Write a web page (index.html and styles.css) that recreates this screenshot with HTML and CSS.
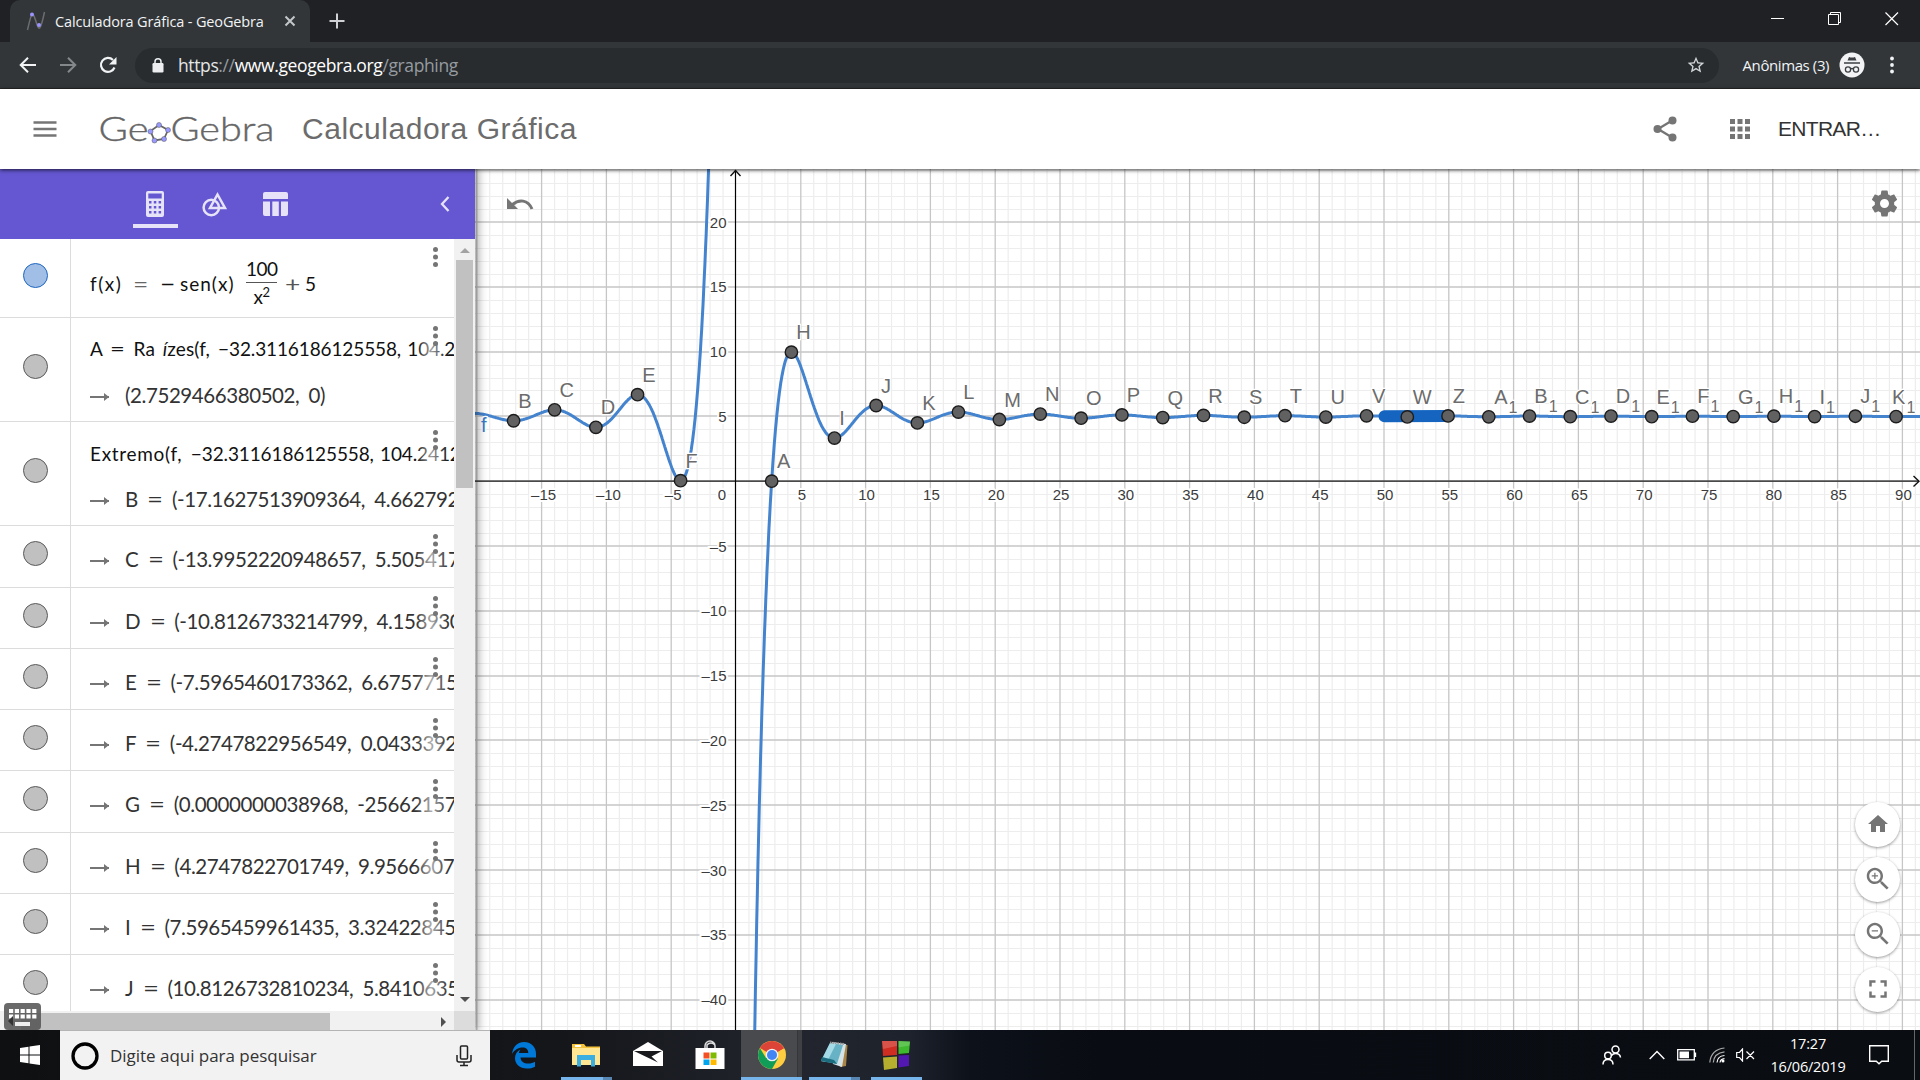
FILE: index.html
```html
<!DOCTYPE html>
<html lang="pt-BR">
<head>
<meta charset="utf-8">
<title>Calculadora Gráfica - GeoGebra</title>
<link rel="stylesheet" href="styles.css">
</head>
<body>
<div class="tabstrip">
  <div class="tab">
    <svg class="tab-icon" width="20" height="20" viewBox="0 0 20 20"><path d="M1.500 19C5 4 6 -2 9.500 9S14 22 18.500 1" fill="none" stroke="#6d6d70" stroke-width="1.500"/><circle cx="6" cy="3.500" r="2" fill="#9a93ff"/><circle cx="13" cy="14" r="2" fill="#9a93ff"/></svg>
    <span class="tab-title">Calculadora Gráfica - GeoGebra</span>
    <svg class="tab-close" width="12" height="12" viewBox="0 0 12 12"><path d="M1.500 1.500l9 9M10.500 1.500l-9 9" stroke="#c4c7ca" stroke-width="2"/></svg>
  </div>
  <svg class="tab-new" width="16" height="16" viewBox="0 0 16 16"><path d="M8 .5v15M.5 8h15" stroke="#cfd1d4" stroke-width="2"/></svg>
  <div class="window-buttons">
    <svg width="14" height="14" viewBox="0 0 14 14"><path d="M0 6.500h13" stroke="#fff"/></svg>
    <svg width="14" height="14" viewBox="0 0 14 14"><path d="M.5 2.500h10v10h-10zM2.500 2.500v-2h10v10h-2" fill="none" stroke="#fff"/></svg>
    <svg width="14" height="14" viewBox="0 0 14 14"><path d="M.5.5l12.500 12.500M13 .5L.5 13" stroke="#fff" stroke-width="1.200"/></svg>
  </div>
</div>
<div class="toolbar">
  <div class="nav-buttons">
    <svg width="18" height="18" viewBox="0 0 18 18"><path d="M17 9H2M9 1.700L1.700 9 9 16.300" fill="none" stroke="#f1f3f4" stroke-width="2"/></svg>
    <svg width="18" height="18" viewBox="0 0 18 18"><path d="M1 9h15M9 1.700L16.300 9 9 16.300" fill="none" stroke="#85888b" stroke-width="2"/></svg>
    <svg width="18" height="18" viewBox="0 0 18 18"><path d="M15.500 11.500A7 7 0 1 1 14 4" fill="none" stroke="#f1f3f4" stroke-width="2.200"/><path d="M17.500 1v7.500H10z" fill="#f1f3f4"/></svg>
  </div>
  <div class="omnibox">
    <svg width="12" height="15" viewBox="0 0 12 15"><rect x="0.500" y="5" width="11" height="9.500" rx="1.200" fill="#eceef0"/><path d="M3 6V3.800a3 3 0 0 1 6 0V6" fill="none" stroke="#eceef0" stroke-width="1.500"/></svg>
    <span class="url"><span class="url-scheme">https<i>://</i></span>www.geogebra.org<i>/graphing</i></span>
    <svg class="star" width="20" height="20" viewBox="0 0 24 24"><path d="M22 9.240l-7.190-.620L12 2 9.190 8.630 2 9.240l5.460 4.730L5.820 21 12 17.270 18.180 21l-1.630-7.030L22 9.240zM12 15.400l-3.760 2.270 1-4.280-3.320-2.880 4.380-.380L12 6.100l1.710 4.040 4.380.380-3.320 2.880 1 4.280L12 15.400z" fill="#d2d4d6"/></svg>
  </div>
  <span class="incognito-label">Anônimas (3)</span>
  <svg class="incognito" width="26" height="26" viewBox="0 0 26 26"><circle cx="13" cy="13" r="12.500" fill="#f1f3f4"/><path d="M8.500 8.500L10 5q3 1 6 0l1.500 3.500zM5 10.200h16v1.600H5z" fill="#3c4043"/><g fill="none" stroke="#3c4043" stroke-width="1.300"><circle cx="9" cy="17.500" r="2.600"/><circle cx="17" cy="17.500" r="2.600"/><path d="M11.600 17q1.400-1 2.800 0"/></g></svg>
  <svg class="menu-dots" width="6" height="18" viewBox="0 0 6 18"><g fill="#f1f3f4"><circle cx="3" cy="2.500" r="1.900"/><circle cx="3" cy="9" r="1.900"/><circle cx="3" cy="15.500" r="1.900"/></g></svg>
</div>
<header class="app-header">
  <svg class="burger" width="24" height="18" viewBox="0 0 24 18"><path d="M.5 2.500h23M.5 9h23M.5 15.500h23" stroke="#757575" stroke-width="2.300"/></svg>
  <svg class="logo" width="184" height="60" viewBox="94 98 184 60">
    <g class="logo-text"><text x="98.500" y="139.800" textLength="50" lengthAdjust="spacingAndGlyphs">Ge</text><text x="170.500" y="139.800" textLength="104" lengthAdjust="spacingAndGlyphs">Gebra</text></g>
    <path d="M159 124l9 5-4 9-9.500 1.500-4-9.500z" fill="none" stroke="#666" stroke-width="1.800"/>
    <g fill="#9999ff" stroke="#555" stroke-width=".5"><circle cx="159" cy="124" r="2.500"/><circle cx="168" cy="129" r="2.500"/><circle cx="164" cy="138" r="2.500"/><circle cx="154.500" cy="139.500" r="2.500"/><circle cx="150.500" cy="130.500" r="2.500"/></g>
  </svg>
  <h1 class="app-title">Calculadora Gráfica</h1>
  <svg class="share" width="28" height="28" viewBox="0 0 28 28"><path d="M22 5L7 14l15 9" fill="none" stroke="#757575" stroke-width="2.300"/><g fill="#757575"><circle cx="21.500" cy="5.500" r="4"/><circle cx="6.500" cy="14" r="4"/><circle cx="21.500" cy="22.500" r="4"/></g></svg>
  <svg class="apps" width="20" height="20" viewBox="0 0 20 20"><path d="M0 0h5v5H0zM7.500 0h5v5h-5zM15 0h5v5h-5zM0 7.500h5v5H0zM7.500 7.500h5v5h-5zM15 7.500h5v5h-5zM0 15h5v5H0zM7.500 15h5v5h-5zM15 15h5v5h-5z" fill="#757575"/></svg>
  <span class="sign-in">ENTRAR…</span>
</header>
<main class="workspace">
  <aside class="panel">
    <nav class="panel-tabs">
      <div class="panel-tab selected"><svg width="18" height="26" viewBox="0 0 18 26"><path fill-rule="evenodd" fill="#e6e3f8" d="M2 0h14a2 2 0 0 1 2 2v22a2 2 0 0 1-2 2H2a2 2 0 0 1-2-2V2a2 2 0 0 1 2-2zM2.300 2.500v5h13.400v-5zM3 10v2.500h2.500V10zM7.800 10v2.500h2.500V10zM12.600 10v2.500h2.500V10zM3 15v2.500h2.500V15zM7.800 15v2.500h2.500V15zM12.600 15v2.500h2.500V15zM3 20v2.500h2.500V20zM7.800 20v2.500h2.500V20zM12.600 20v2.500h2.500V20z"/></svg></div>
      <div class="panel-tab"><svg width="26" height="26" viewBox="0 0 26 26"><g fill="none" stroke="#e6e3f8" stroke-width="2.500"><circle cx="9.300" cy="16.500" r="7.700"/><path d="M15.500 3.500L23 17H8z"/></g></svg></div>
      <div class="panel-tab"><svg width="25" height="24" viewBox="0 0 25 24"><path fill="#e6e3f8" d="M2 0h21a2 2 0 0 1 2 2v5H0V2a2 2 0 0 1 2-2zM0 9.500h7V24H2a2 2 0 0 1-2-2zM9.300 9.500h6.500V24H9.300zM18 9.500h7V22a2 2 0 0 1-2 2h-5z"/></svg></div>
      <svg class="collapse" width="10" height="16" viewBox="0 0 10 16"><path d="M8.500 1L2 8l6.500 7" fill="none" stroke="#e6e3f8" stroke-width="2.300"/></svg>
    </nav>
    <div class="panel-body">
      <div class="rows">
        <div class="row formula"><b class="marble blue"></b><div class="cell"><div class="math"><span class="fx">f(x)</span><span class="eq">=</span><span class="neg">−</span><span class="sen">sen(x)</span><span class="frac"><span>100</span><span>x<sup>2</sup></span></span><span class="plus">+</span><span>5</span></div></div><u class="dots"></u></div>
        <div class="row tall"><b class="marble"></b><div class="cell"><div class="in">A <i>=</i> Ra<em> í</em>zes(f, <s>−32.3116186125558, 104.2</s></div><div class="out"><q></q><span class="val">(2.7529466380502, 0)</span></div></div><u class="dots"></u></div>
        <div class="row tall"><b class="marble"></b><div class="cell"><div class="in wide">Extremo(f, <s>−32.3116186125558, 104.2412</s></div><div class="out"><q></q><span class="val">B <i>=</i> (-17.1627513909364, 4.662792</span></div></div><u class="dots"></u></div>
        <div class="row mid"><b class="marble"></b><div class="cell"><div class="out"><q></q><span class="val">C <i>=</i> (-13.9952220948657, 5.505417</span></div></div><u class="dots"></u></div>
        <div class="row"><b class="marble"></b><div class="cell"><div class="out"><q></q><span class="val">D <i>=</i> (-10.8126733214799, 4.158930</span></div></div><u class="dots"></u></div>
        <div class="row"><b class="marble"></b><div class="cell"><div class="out"><q></q><span class="val">E <i>=</i> (-7.5965460173362, 6.6757715</span></div></div><u class="dots"></u></div>
        <div class="row"><b class="marble"></b><div class="cell"><div class="out"><q></q><span class="val">F <i>=</i> (-4.2747822956549, 0.0433392</span></div></div><u class="dots"></u></div>
        <div class="row mid"><b class="marble"></b><div class="cell"><div class="out"><q></q><span class="val">G <i>=</i> (0.0000000038968, -25662157</span></div></div><u class="dots"></u></div>
        <div class="row"><b class="marble"></b><div class="cell"><div class="out"><q></q><span class="val">H <i>=</i> (4.2747822701749, 9.9566607</span></div></div><u class="dots"></u></div>
        <div class="row"><b class="marble"></b><div class="cell"><div class="out"><q></q><span class="val">I <i>=</i> (7.5965459961435, 3.32422845</span></div></div><u class="dots"></u></div>
        <div class="row"><b class="marble"></b><div class="cell"><div class="out"><q></q><span class="val">J <i>=</i> (10.8126732810234, 5.8410635</span></div></div><u class="dots"></u></div>
      </div>
      <div class="vscroll">
        <svg width="10" height="5" viewBox="0 0 10 5"><path d="M0 5l5-5 5 5z" fill="#a3a3a3"/></svg>
        <div class="vthumb"></div>
        <svg class="down" width="10" height="5" viewBox="0 0 10 5"><path d="M0 0l5 5 5-5z" fill="#505050"/></svg>
      </div>
    </div>
    <div class="hscroll">
      <div class="htrack"><div class="hthumb"></div><svg width="5" height="10" viewBox="0 0 5 10"><path d="M0 0l5 5-5 5z" fill="#505050"/></svg></div>
      <div class="corner"></div>
    </div>
    <svg class="keyboard" width="37" height="27" viewBox="0 0 37 27"><rect width="37" height="27" rx="4" fill="#555" fill-opacity=".88"/><path d="M5 8h28M5 13.500h28" stroke="#fff" stroke-width="4" stroke-dasharray="4.200 1.600"/><path d="M11 21h15" stroke="#eee" stroke-width="4"/><path d="M9 13v10l-5-5z" fill="#333"/></svg>
  </aside>
  <section class="graph">
    <svg id="plot" width="1445" height="861" viewBox="475 169 1445 861"></svg>
    <svg class="undo" width="27" height="13" viewBox="0 0 27 13"><path d="M0 0l11 11H0z" fill="#757575"/><path d="M5.500 6.500C12 1 21 1.500 25 11" fill="none" stroke="#757575" stroke-width="3"/></svg>
    <svg class="gear" width="31" height="31" viewBox="0 0 24 24"><path fill="#757575" d="M19.430 12.980c.04-.32.070-.64.070-.98s-.03-.66-.07-.98l2.110-1.650c.19-.15.240-.42.120-.64l-2-3.460c-.12-.22-.39-.3-.61-.22l-2.490 1c-.52-.4-1.080-.73-1.690-.98l-.38-2.650C14.460 2.180 14.250 2 14 2h-4c-.25 0-.46.18-.49.42l-.38 2.650c-.61.250-1.170.59-1.690.98l-2.490-1c-.23-.09-.49 0-.61.22l-2 3.460c-.13.22-.07.49.12.64l2.110 1.650c-.04.32-.07.65-.07.98s.03.66.07.98l-2.110 1.650c-.19.15-.24.42-.12.64l2 3.460c.12.22.39.3.61.22l2.490-1c.52.4 1.080.73 1.690.98l.38 2.650c.03.24.24.42.49.42h4c.25 0 .46-.18.49-.42l.38-2.650c.61-.25 1.170-.59 1.690-.98l2.490 1c.23.09.49 0 .61-.22l2-3.460c.12-.22.07-.49-.12-.64l-2.110-1.650zM12 15.500c-1.930 0-3.500-1.570-3.500-3.500s1.570-3.500 3.500-3.500 3.500 1.570 3.500 3.500-1.570 3.500-3.500 3.500z"/></svg>
    <div class="view-buttons">
      <span><svg width="24" height="24" viewBox="0 0 24 24"><path fill="#757575" d="M10 20v-6h4v6h5v-8h3L12 3 2 12h3v8z"/></svg></span>
      <span><svg width="30" height="30" viewBox="0 0 24 24"><path fill="#757575" d="M15.500 14h-.79l-.28-.27C15.410 12.590 16 11.110 16 9.500 16 5.910 13.090 3 9.500 3S3 5.910 3 9.500 5.910 16 9.500 16c1.610 0 3.090-.59 4.230-1.570l.27.28v.79l5 4.990L20.490 19l-4.990-5zm-6 0C7.010 14 5 11.990 5 9.500S7.010 5 9.500 5 14 7.010 14 9.500 11.990 14 9.500 14zM12 10h-2v2H9v-2H7V9h2V7h1v2h2v1z"/></svg></span>
      <span><svg width="30" height="30" viewBox="0 0 24 24"><path fill="#757575" d="M15.500 14h-.79l-.28-.27C15.410 12.590 16 11.110 16 9.500 16 5.910 13.090 3 9.500 3S3 5.910 3 9.500 5.910 16 9.500 16c1.610 0 3.090-.59 4.230-1.570l.27.28v.79l5 4.990L20.490 19l-4.990-5zm-6 0C7.010 14 5 11.990 5 9.500S7.010 5 9.500 5 14 7.010 14 9.500 11.990 14 9.500 14zM7 9h5v1H7z"/></svg></span>
      <span><svg width="30" height="30" viewBox="0 0 24 24"><path fill="#757575" d="M7 14H5v5h5v-2H7v-3zm-2-4h2V7h3V5H5v5zm12 7h-3v2h5v-5h-2v3zM14 5v2h3v3h2V5h-5z"/></svg></span>
    </div>
  </section>
</main>
<footer class="taskbar">
  <div class="start"><svg width="20" height="20" viewBox="0 0 20 20"><path d="M0 3l8.500-1.200v7.700H0zM9.500 1.600L20 0v9.500H9.500zM0 10.500h8.500v7.700L0 17zM9.500 10.500H20V20L9.500 18.400z" fill="#fff"/></svg></div>
  <div class="search">
    <svg width="28" height="28" viewBox="0 0 28 28"><circle cx="14" cy="14" r="12" fill="none" stroke="#000" stroke-width="3.300"/></svg>
    <span>Digite aqui para pesquisar</span>
    <svg class="mic" width="16" height="22" viewBox="0 0 16 22"><g fill="none" stroke="#222" stroke-width="1.500"><rect x="4.500" y="1" width="7" height="13" rx="1"/><path d="M1 10v5q0 2 2 2h10q2 0 2-2v-5M8 17v3M4 20.500h8"/></g></svg>
  </div>
  <div class="apps-bar">
    <div class="app"><svg width="26" height="28" viewBox="0 0 26 28"><path d="M1 13C2 5 7 1 13 1c8 0 12 6 12 12v3.500H9.500c.3 4 3.500 6 7.500 6 3 0 5-.7 7-1.800v5C21.500 27 19 27.500 16 27.500 8.500 27.500 4 23 4 17.200c0-4 2-7 5.500-8.700-1 1.200-1.500 2.300-1.700 3.500h9.500c0-3-1.500-5.500-5.500-5.500C7 6.500 3.500 9 1 13z" fill="#0078d7"/></svg></div>
    <div class="app running split"><svg width="28" height="24" viewBox="0 0 28 24"><path d="M0 1h12l2 2.500h14V22H0z" fill="#f5c33b"/><path d="M0 5h28v17H0z" fill="#ffe693"/><path d="M3 2h6v2H3z" fill="#fff"/><path d="M5 12h18v11.500h-4V17H9v6.500H5z" fill="#3aaee0"/></svg></div>
    <div class="app"><svg width="30" height="25" viewBox="0 0 30 25"><path d="M0 9L15 0l15 9v15H0z" fill="#fff"/><path d="M1 9h28l-10.500 5.500L25 20.500z" fill="#17191d"/></svg></div>
    <div class="app"><svg width="30" height="30" viewBox="0 0 30 30"><path d="M10 8V6a5 5 0 0 1 10 0v2M12 8V5a5 5 0 0 1 8 0" fill="none" stroke="#ddd" stroke-width="1.500"/><path d="M.5 8h29v21h-29z" fill="#fff"/><path d="M8.500 12.500h6v6h-6z" fill="#f25022"/><path d="M15.500 12.500h6v6h-6z" fill="#7fba00"/><path d="M8.500 19.500h6v5.500h-6z" fill="#00a4ef"/><path d="M15.500 19.500h6v5.500h-6z" fill="#ffb900"/></svg></div>
    <div class="app running active"><svg width="28" height="28" viewBox="0 0 28 28"><circle cx="14" cy="14" r="14" fill="#ffcd40"/><path d="M14 14L1.900 7A14 14 0 0 1 26.100 7z" fill="#db4437"/><path d="M14 7h12.100L14 14z" fill="#db4437"/><path d="M1.900 7A14 14 0 0 0 14 28l6-10.500-12-.5z" fill="#0f9d58"/><circle cx="14" cy="14" r="6.300" fill="#f1f1f1"/><circle cx="14" cy="14" r="5" fill="#4285f4"/></svg></div>
    <div class="app running split"><svg width="28" height="28" viewBox="0 0 28 28"><path d="M14 2l13.500 2-1.500 21-6 1z" fill="#a98545"/><path d="M12 1l14 2-4 23-9-3z" fill="#d3e3e8"/><path d="M10 2l13 2-6 19-16-3z" fill="#67b2c4"/><path d="M10 2l6 1L7 21l-6-1z" fill="#a5dbe6"/><path d="M2 16l12 3 3 4-16-3z" fill="#1d6d80"/><path d="M10 1.500l14 1.500" stroke="#999" stroke-width="2" stroke-dasharray="1.500 1"/></svg></div>
    <div class="app running"><svg width="28" height="30" viewBox="0 0 28 30"><path d="M0 1l15 0v14L1 16z" fill="#cf2c22"/><path d="M16.500 1L28 1.500 27 13l-10.500 1z" fill="#3fb92e"/><path d="M1 17.500l14-1V28L2 30z" fill="#b5ae2f"/><path d="M16.500 15.500L27 15v11l-10.500 1.500z" fill="#5317b2"/><path d="M0 1h15v5L1 9zM16.500 1L28 1.500l-.5 4-11 2z" fill="#fff" fill-opacity=".18"/></svg></div>
  </div>
  <div class="tray">
    <svg class="people" width="20" height="20" viewBox="0 0 20 20"><g fill="none" stroke="#fff" stroke-width="1.500"><circle cx="6" cy="10.500" r="3.300"/><circle cx="13.500" cy="4.500" r="3.500"/><path d="M1 19.500q0-5 5-5t5 5M9.500 10.500Q11 8.500 13.500 8.500q4.500 0 5 4"/></g></svg>
    <svg class="chev" width="16" height="10" viewBox="0 0 16 10"><path d="M.7 9L8 1.500 15.300 9" fill="none" stroke="#fff" stroke-width="1.400"/></svg>
    <svg class="batt" width="20" height="12" viewBox="0 0 20 12"><path d="M.7.700h16.600v10.100H.7zM18.500 3.500v4.500" fill="none" stroke="#fff" stroke-width="1.300"/><path d="M2.500 2.500h9.500v6.700H2.500z" fill="#fff"/></svg>
    <svg class="wifi" width="16" height="16" viewBox="0 0 16 16"><g fill="none" stroke="#aaa" stroke-width="1.200"><path d="M.8 15.500Q2 2.500 15.500 1M4.300 15.500Q5 6 15.500 4.800"/><path d="M8 15.500q.5-6.500 7.500-7M11 15.500q.5-3.500 4.500-3.800" stroke="#fff"/></g><circle cx="14" cy="14" r="1.500" fill="#fff"/></svg>
    <svg class="vol" width="19" height="14" viewBox="0 0 19 14"><path d="M.7 4.500h2.800l3-3.500v12l-3-3.500H.7zM10.500 3.500l7.500 7.500M18 3.500L10.500 11" fill="none" stroke="#fff" stroke-width="1.200"/></svg>
    <div class="clock"><span>17:27</span><span>16/06/2019</span></div>
    <svg class="notif" width="20" height="20" viewBox="0 0 20 20"><path d="M.7.700h18.600v15.600h-6.600L10 18.800l-2.700-2.500H.7z" fill="none" stroke="#fff" stroke-width="1.400"/></svg>
    <div class="peek"></div>
  </div>
</footer>
<script src="plot.js"></script>
</body>
</html>
```
FILE: styles.css
```css
* { box-sizing: border-box; }
body {
  margin: 0;
  width: 1920px;
  height: 1080px;
  overflow: hidden;
  display: flex;
  flex-direction: column;
  background: #fff;
  font-family: "Liberation Sans", sans-serif;
}
svg { display: block; flex: none; }

/* browser chrome */
.tabstrip {
  height: 42px;
  flex: none;
  background: #202124;
  display: flex;
  align-items: center;
  padding-left: 10px;
  font-family: "Open Sans", sans-serif;
}
.tab {
  width: 300px;
  height: 42px;
  background: #323639;
  border-radius: 10px 10px 0 0;
  display: flex;
  align-items: center;
  padding-left: 16px;
}
.tab-title {
  margin-left: 9px;
  width: 229px;
  font-size: 14.5px;
  letter-spacing: -0.14px;
  color: #f1f3f4;
  white-space: nowrap;
}
.tab-new { margin-left: 19px; }
.window-buttons { margin-left: auto; margin-right: 21px; display: flex; gap: 43px; padding-bottom: 4px; }
.toolbar {
  height: 47px;
  flex: none;
  background: #323639;
  border-bottom: 1px solid #26282a;
  display: flex;
  align-items: center;
  padding-left: 18.500px;
  font-family: "Open Sans", sans-serif;
}
.nav-buttons { display: flex; gap: 22px; width: 116.500px; }
.omnibox {
  width: 1584px;
  height: 35px;
  border-radius: 18px;
  background: #282c2f;
  display: flex;
  align-items: center;
  padding: 0 13px 0 17px;
}
.url { margin-left: 14px; font-size: 17.5px; letter-spacing: -0.38px; color: #fff; white-space: nowrap; }
.url-scheme { color: #e4e6e8; }
.url i { font-style: normal; color: #969ba0; }
.star { margin-left: auto; }
.incognito-label { margin-left: 23.500px; width: 96.500px; font-size: 15px; letter-spacing: -0.4px; color: #f1f3f4; white-space: nowrap; }
.menu-dots { margin-left: 24px; }

/* application header */
.app-header {
  position: relative;
  z-index: 3;
  height: 80px;
  flex: none;
  background: #fff;
  box-shadow: 0 1px 4px rgba(0, 0, 0, .75);
  display: flex;
  align-items: center;
  padding-left: 33px;
}
.logo { margin-left: 37px; }
.logo-text { font-family: Lato, sans-serif; font-size: 34px; font-weight: 300; fill: #666; stroke: #666; stroke-width: .4px; }
.app-title { margin: 0 0 0 24px; font-size: 30px; font-weight: 400; letter-spacing: 0.52px; color: #6c6c6c; white-space: nowrap; }
.share { margin-left: auto; }
.apps { margin-left: 51px; }
.sign-in { margin-left: 28px; width: 142px; font-size: 21px; letter-spacing: -0.7px; color: #333; }

/* algebra panel */
.workspace { flex: 1; min-height: 0; display: flex; }
.panel {
  position: relative;
  z-index: 2;
  width: 475px;
  flex: none;
  background: #fff;
  box-shadow: 1px 0 9px 2px rgba(0, 0, 0, .38);
  display: flex;
  flex-direction: column;
}
.panel-tabs { height: 70px; flex: none; background: #6557d2; display: flex; padding-left: 133px; gap: 15px; }
.panel-tab { width: 45px; height: 59px; padding: 14px 1px 0 0; display: flex; align-items: center; justify-content: center; border-bottom: 4px solid transparent; }
.panel-tab.selected { border-color: #e6e3f8; }
.collapse { margin: 27px 25px 0 auto; }
.panel-body { flex: 1; min-height: 0; display: flex; }
.rows { width: 454px; overflow: hidden; font-family: Lato, "Liberation Sans", sans-serif; }
.row {
  position: relative;
  height: 61px;
  border-bottom: 1px solid #dcdcdc;
  display: flex;
}
.row.mid { height: 62px; }
.row.tall { height: 104px; }
.row.formula { height: 79px; }
.marble {
  width: 25px;
  height: 25px;
  flex: none;
  margin: 15px 22px 0 23px;
  border-radius: 50%;
  background: #c0c0c0;
  border: 1px solid #5a5a5a;
}
.marble.blue { background: #a1bfe6; border-color: #1e65c0; }
.formula .marble { margin-top: 24px; }
.tall .marble { margin-top: 36px; }
.cell { flex: 1; min-width: 0; border-left: 1px solid #dcdcdc; padding: 21px 0 0 19px; overflow: hidden; white-space: pre; }
.tall .cell { padding-top: 19px; }
.cell i { display: inline-block; font-style: normal; transform: scaleX(1.35); margin: 0 2px; }
.in { height: 24px; line-height: 24px; margin-bottom: 22px; font-size: 19px; letter-spacing: 0.15px; word-spacing: 3px; color: #111; }
.in.wide { padding-top: 1px; letter-spacing: 0.68px; }
.in s { text-decoration: none; letter-spacing: -0.12px; word-spacing: 1.500px; }
.out { height: 24px; line-height: 24px; display: flex; align-items: center; font-size: 20.500px; letter-spacing: -0.42px; word-spacing: 4.500px; color: #333; }
.out q { position: relative; flex: none; width: 19px; height: 2px; margin: 4px 16px 0 0; background: #757575; quotes: none; }
.out q::before { content: none; }
.out q::after { content: ""; position: absolute; right: 0; top: -3px; border-left: 5px solid #757575; border-top: 4px solid transparent; border-bottom: 4px solid transparent; }
.dots { position: absolute; right: 0; top: 5px; width: 38px; height: 50px; background: linear-gradient(90deg, rgba(255,255,255,0), rgba(255,255,255,.6) 40%, rgba(255,255,255,0) 85%); }
.dots::after { content: ""; position: absolute; left: 17px; top: 3px; width: 5px; height: 5px; border-radius: 50%; background: #757575; box-shadow: 0 7.5px #757575, 0 15px #757575; }
.math { display: flex; align-items: center; height: 50px; margin-top: -1px; font-size: 19px; color: #111; line-height: 22px; }
.formula .cell { padding-top: 21px; }
.fx { width: 43px; letter-spacing: 1.5px; }
.eq { width: 27px; font-size: 22px; color: #666; }
.eq, .neg, .plus { transform: scaleX(1.2); transform-origin: 0 50%; }
.neg { width: 20px; font-size: 22px; }
.sen { width: 66px; letter-spacing: 1px; }
.frac { width: 31px; margin-right: 8px; display: flex; flex-direction: column; align-items: center; letter-spacing: -0.5px; }
.frac span:first-child { width: 31px; text-align: center; border-bottom: 1px solid #555; line-height: 22px; padding-bottom: 2px; }
.frac span:last-child { line-height: 28px; }
.frac sup { font-size: 13px; line-height: 0; }
.plus { width: 20px; font-size: 22px; color: #555; }

.vscroll { width: 21px; background: #f1f1f1; display: flex; flex-direction: column; align-items: center; padding: 9px 0; }
.vthumb { width: 17px; height: 228px; margin-top: 7px; background: #c1c1c1; }
.down { margin-top: auto; }
.hscroll { height: 19px; flex: none; display: flex; }
.htrack { width: 454px; background: #f1f1f1; display: flex; align-items: center; padding: 2px 8px 0 21px; justify-content: space-between; }
.hthumb { width: 309px; height: 17px; background: #c1c1c1; }
.corner { width: 21px; background: #dcdcdc; }
.keyboard { position: absolute; left: 4px; bottom: 0; }

/* graphics view */
.graph { position: relative; flex: 1; overflow: hidden; }
.minor { stroke: #ededed; stroke-width: 1.200; }
.major { stroke: #c6c6c6; stroke-width: 1.300; }
.tick { font-size: 15px; fill: #3c3c3c; stroke: #fff; stroke-width: 4px; paint-order: stroke; }
.name { font-size: 20px; fill: #6c6c6c; stroke: #fff; stroke-width: 2.500px; paint-order: stroke; }
.name .sub { font-size: 16px; }
.name.fn { fill: #3a7cc9; }
.curve { fill: none; stroke: #4483ce; stroke-width: 3; }
.trace { fill: none; stroke: #1565c0; stroke-width: 12; stroke-linecap: round; }
.point { fill: #616161; stroke: #1c1c1c; stroke-width: 1.400; }
.undo { position: absolute; left: 32px; top: 29px; }
.gear { position: absolute; right: 20px; top: 19px; }
.view-buttons { position: absolute; right: 20px; top: 632.500px; display: flex; flex-direction: column; gap: 10px; }
.view-buttons span { width: 45px; height: 45px; border-radius: 50%; background: #fff; box-shadow: 0 1px 3px rgba(0, 0, 0, .4); display: flex; align-items: center; justify-content: center; padding-bottom: 1px; }

/* taskbar */
.taskbar {
  position: relative;
  z-index: 4;
  height: 50px;
  flex: none;
  display: flex;
  background: linear-gradient(90deg, #0f1012 0, #14161a 560px, #22252d 800px, #1d222c 910px, #0d111a 970px, #090c12 1100px, #0a0d12);
  color: #fff;
  font-family: "Open Sans", sans-serif;
}
.start { width: 60px; display: flex; align-items: center; justify-content: center; }
.search { width: 430px; background: #f2f2f2; border-top: 1px solid #b4b4b4; display: flex; align-items: center; padding: 0 18px 0 11px; color: #333; font-size: 17px; letter-spacing: -0.03px; white-space: nowrap; }
.search span { margin-left: 11px; }
.mic { margin-left: auto; }
.apps-bar { display: flex; margin-left: 3px; }
.app { width: 62px; height: 50px; display: flex; align-items: center; justify-content: center; border-bottom: 3px solid transparent; padding-top: 2px; }
.app.running { width: 51px; margin: 0 5.500px; border-color: #76b4ec; }
.app.split { border-image: linear-gradient(90deg, #76b4ec 79%, #5886b3 79%) 3; border-width: 0 0 3px; border-style: solid; }
.app.active { width: 61px; margin: 0 1px 0 0; background: linear-gradient(90deg, #484a4e 56px, #2a2c30 56px, #3e4044 57px); }
.tray { margin-left: auto; display: flex; align-items: center; }
.chev { margin-left: 27px; }
.batt { margin-left: 12px; }
.wifi { margin-left: 12px; }
.vol { margin-left: 11px; }
.clock { margin-left: 10px; width: 86px; display: flex; flex-direction: column; text-align: center; font-size: 14.500px; line-height: 23px; letter-spacing: -0.2px; }
.notif { margin-left: 18px; }
.peek { width: 1px; height: 50px; background: #63666a; margin: 0 5px 0 25px; }
```
FILE: plot.js
```js
const svg = document.getElementById('plot');
const X0 = 736, Y0 = 481.2, UNIT = 12.96;
const px = x => X0 + x * UNIT;
const py = y => Y0 - y * UNIT;
const f = x => -Math.sin(x) * 100 / (x * x) + 5;
const parts = [];
const line = (cls, x1, y1, x2, y2) =>
  parts.push(`<line class="${cls}" x1="${x1}" y1="${y1}" x2="${x2}" y2="${y2}"/>`);

// one pass for the fine grid, one for the lines every five units
for (const cls of ['minor', 'major']) {
  for (let i = -20; i <= 91; i++) {
    if ((i % 5 === 0) === (cls === 'major') && i !== 0) line(cls, px(i), 169, px(i), 1030);
  }
  for (let i = -42; i <= 24; i++) {
    if ((i % 5 === 0) === (cls === 'major') && i !== 0) {
      const y = Math.round(py(i)) + (cls === 'major' ? 0 : 0.5);
      line(cls, 475, y, 1920, y);
    }
  }
}
parts.push('<g fill="none"><path d="M475 481.200H1919" stroke="#4a4a4a" stroke-width="1.700"/><path d="M735.500 170V1030" stroke="#000" stroke-width="1.200"/><path d="M1913.500 476l5.500 5.200-5.500 5.200M730.500 176l5-5.500 5 5.500" stroke="#111" stroke-width="1.400"/></g>');

const branch = (from, to) => {
  const pts = [];
  for (let x = from; x <= to; x += 0.05) pts.push(px(x).toFixed(1) + ',' + py(f(x)).toFixed(1));
  return `<polyline class="curve" points="${pts.join(' ')}"/>`;
};
parts.push(branch(-20.2, -1), branch(1, 91.5));
parts.push(`<path class="trace" d="M1384.500 416.200L1448 416"/>`);

const label = (cls, x, y, text, anchor) =>
  parts.push(`<text class="${cls}" x="${x}" y="${y}" text-anchor="${anchor}">${text}</text>`);
const num = n => (n < 0 ? '–' : '') + Math.abs(n);
for (let i = -15; i <= 90; i += 5) {
  if (i) label('tick', px(i) + (i < 0 ? 2 : 1), 500, num(i), 'middle');
}
for (let i = -40; i <= 20; i += 5) {
  if (i) label('tick', 726.5, py(i) + 5.6, num(i), 'end');
}
label('tick', 726, 500, '0', 'end');

// points: the root A, the extrema left of the axis, then those right of it
const points = [['A', 2.7529], ['B', -17.1628], ['C', -13.9952], ['D', -10.8127], ['E', -7.5965], ['F', -4.2748]];
const names = [...'HIJKLMNOPQRSTUVWZ', ...[...'ABCDEFGHIJK'].map(c => c + '1')];
names.forEach((name, i) => {
  const k = (i + 1) * Math.PI;
  let x = k + 1.3;
  for (let n = 0; n < 60; n++) x = k + Math.atan(x / 2);
  points.push([name, x]);
});
for (const [name, x] of points) {
  const text = name[0] + (name[1] ? '<tspan class="sub" dx="1" dy="9">1</tspan>' : '');
  // the last label is pulled back so that it stays inside the view
  const dx = name === 'K1' ? -4 : 'AVW'.includes(name[0]) ? 5.4 : 4.8;
  label('name', px(x) + dx, py(f(x)) - 12.9, text, 'start');
}
label('name fn', 481, 432, 'f', 'start');
for (const [, x] of points) parts.push(`<circle class="point" cx="${px(x)}" cy="${py(f(x))}" r="6.200"/>`);
svg.innerHTML = parts.join('');
```
